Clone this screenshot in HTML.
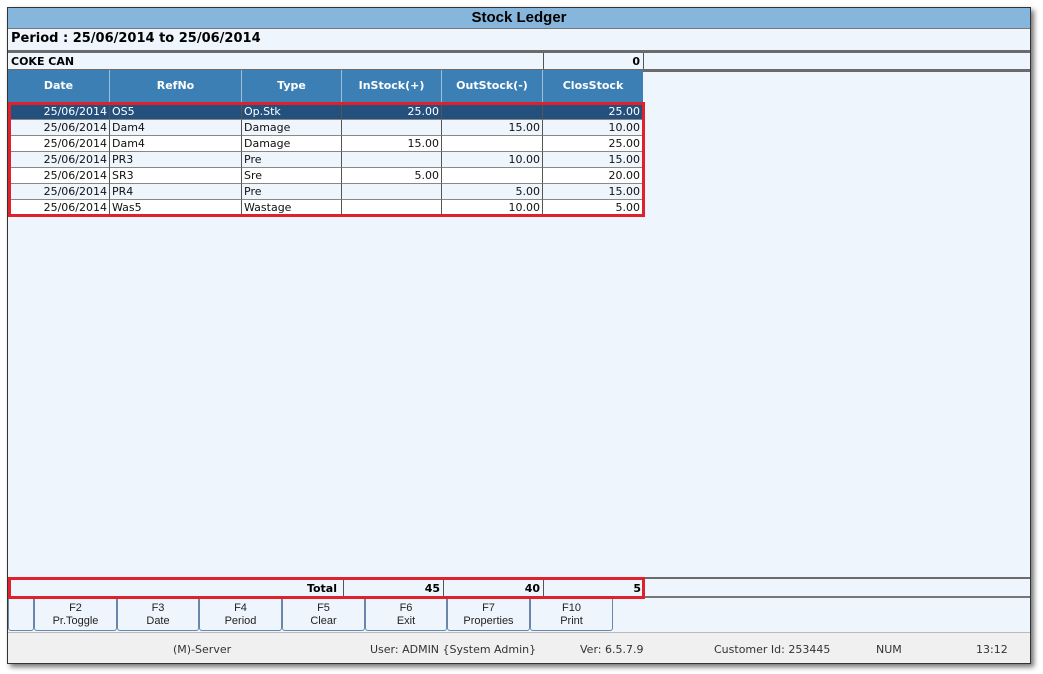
<!DOCTYPE html><html><head><style>
*{margin:0;padding:0;box-sizing:border-box}
body{width:1043px;height:674px;background:#fff;position:relative;font-family:Tahoma,"DejaVu Sans","Liberation Sans",sans-serif;font-size:11px;overflow:hidden}
.a{position:absolute}
#win{left:7px;top:7px;width:1024px;height:657px;border:1px solid #333;background:#eef5fd;box-shadow:3px 3px 5px rgba(0,0,0,.55)}
.hl{position:absolute;height:3px;background:#6b6b6b;left:0;right:0}
.c{position:absolute;height:16px;line-height:16px;border-right:1px solid #555;border-bottom:1px solid #888;padding:0 2px;white-space:nowrap}
.r{text-align:right}
.h{position:absolute;top:62px;height:32px;line-height:32px;color:#fff;font-weight:bold;text-align:center;background:#3c7fb4;border-right:1px solid #9dbfdc}
.btn{position:absolute;top:591px;height:32px;background:#eef5fd;border:1px solid #6a86a8;border-top:none;border-radius:0 0 3px 3px;text-align:center;font-family:"Liberation Sans Narrow","Liberation Sans",sans-serif;font-size:11px;line-height:13px;padding-top:3px;color:#222}
</style></head><body>
<div id="win" class="a">
<div class="a" style="left:0;top:0;width:1022px;height:20px;background:#87b6dc;text-align:center;font:bold 15px 'Liberation Sans',sans-serif;line-height:20px">Stock Ledger</div>
<div class="hl" style="top:20px;height:1px;background:#777"></div>
<div class="a" style="left:3px;top:23px;font-weight:bold;font-size:13px">Period : 25/06/2014 to 25/06/2014</div>
<div class="hl" style="top:42px"></div>
<div class="a" style="left:3px;top:47px;font-weight:bold">COKE CAN</div>
<div class="a" style="left:535px;top:45px;width:101px;height:17px;border-left:1px solid #555;border-right:1px solid #555;text-align:right;padding-right:3px;font-weight:bold;line-height:17px">0</div>
<div class="hl" style="top:61px"></div>
<div class="h" style="left:0;width:102px">Date</div>
<div class="h" style="left:102px;width:132px">RefNo</div>
<div class="h" style="left:234px;width:100px">Type</div>
<div class="h" style="left:334px;width:100px">InStock(+)</div>
<div class="h" style="left:434px;width:101px">OutStock(-)</div>
<div class="h" style="left:535px;width:100px;border-right:none">ClosStock</div>
<div id="rows"></div>
<div class="a" style="left:0;top:94px;width:637px;height:115px;border:3px solid #e0202a"></div>
<div class="hl" style="top:569px;height:2px"></div>
<div class="a" style="left:0;top:571px;width:1022px;height:19px;border-bottom:2px solid #777"></div>
<div class="a" style="left:0;top:571px;width:336px;height:19px;text-align:right;padding-right:6px;font-weight:bold;line-height:19px;border-right:1px solid #555">Total</div>
<div class="a" style="left:336px;top:571px;width:100px;height:19px;text-align:right;padding-right:3px;font-weight:bold;line-height:19px;border-right:1px solid #555">45</div>
<div class="a" style="left:436px;top:571px;width:100px;height:19px;text-align:right;padding-right:3px;font-weight:bold;line-height:19px;border-right:1px solid #555">40</div>
<div class="a" style="left:536px;top:571px;width:100px;height:19px;text-align:right;padding-right:3px;font-weight:bold;line-height:19px">5</div>
<div class="a" style="left:0;top:569px;width:637px;height:22px;border:3px solid #e0202a"></div>
<div class="btn" style="left:0;width:26px"></div>
<div class="btn" style="left:26px;width:83px">F2<br>Pr.Toggle</div>
<div class="btn" style="left:109px;width:82px">F3<br>Date</div>
<div class="btn" style="left:191px;width:83px">F4<br>Period</div>
<div class="btn" style="left:274px;width:83px">F5<br>Clear</div>
<div class="btn" style="left:357px;width:82px">F6<br>Exit</div>
<div class="btn" style="left:439px;width:83px">F7<br>Properties</div>
<div class="btn" style="left:522px;width:83px">F10<br>Print</div>
<div class="a" style="left:0;top:624px;width:1022px;height:31px;background:#f0f0f0;border-top:1px solid #bbb;color:#333">
<span class="a" style="left:165px;top:10px">(M)-Server</span>
<span class="a" style="left:362px;top:10px">User: ADMIN {System Admin}</span>
<span class="a" style="left:572px;top:10px">Ver: 6.5.7.9</span>
<span class="a" style="left:706px;top:10px">Customer Id: 253445</span>
<span class="a" style="left:868px;top:10px">NUM</span>
<span class="a" style="left:968px;top:10px">13:12</span>
</div>
</div>
<script>
var d=[["OS5","Op.Stk","25.00","","25.00"],["Dam4","Damage","","15.00","10.00"],["Dam4","Damage","15.00","","25.00"],["PR3","Pre","","10.00","15.00"],["SR3","Sre","5.00","","20.00"],["PR4","Pre","","5.00","15.00"],["Was5","Wastage","","10.00","5.00"]];
var x=[0,102,234,334,434,535,635],h="";
d.forEach(function(r,i){var t=96+i*16,bg=i==0?"#24507e":(i%2?"#eef5fd":"#fff"),col=i==0?"#fff":"#111";
var v=["25/06/2014"].concat(r);
for(var j=0;j<6;j++){h+='<div class="c'+(j==0||j>2?' r':'')+'" style="left:'+x[j]+'px;top:'+t+'px;width:'+(x[j+1]-x[j])+'px;background:'+bg+';color:'+col+'">'+v[j]+'</div>';}});
document.getElementById("rows").innerHTML=h;
</script>
</body></html>
